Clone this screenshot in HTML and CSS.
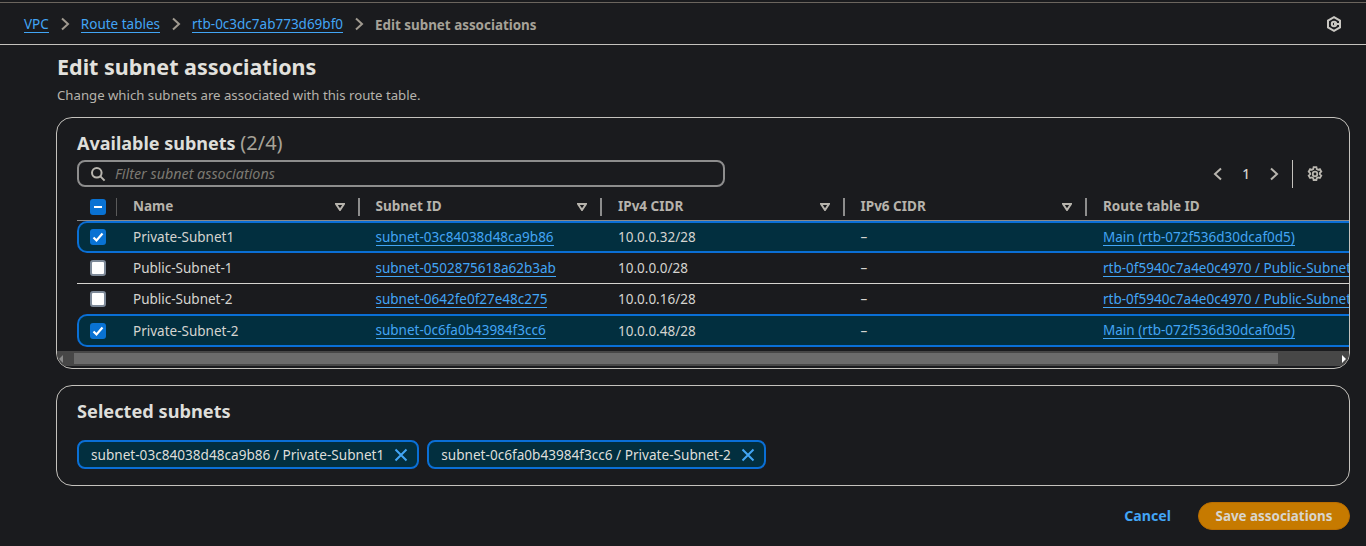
FILE: index.html
```html
<!DOCTYPE html>
<html lang="en">
<head>
<meta charset="utf-8">
<title>Edit subnet associations</title>
<link rel="stylesheet" href="styles.css">
</head>
<body>
<nav class="crumbs">
  <a class="link" href="#">VPC</a>
  <svg class="chev" viewBox="0 0 10 14"><path d="M2 1.5 8 7l-6 5.5"/></svg>
  <a class="link" href="#">Route tables</a>
  <svg class="chev" viewBox="0 0 10 14"><path d="M2 1.5 8 7l-6 5.5"/></svg>
  <a class="link" href="#">rtb-0c3dc7ab773d69bf0</a>
  <svg class="chev" viewBox="0 0 10 14"><path d="M2 1.5 8 7l-6 5.5"/></svg>
  <span class="current">Edit subnet associations</span>
  <svg class="hex" viewBox="0 0 16 16"><path d="M8 1.200 14 4.600v6.800L8 14.800 2 11.400V4.600z"/><circle cx="8" cy="8" r="2.200"/><path d="M8 8h6"/></svg>
</nav>
<main class="page">
  <h1>Edit subnet associations</h1>
  <p class="sub">Change which subnets are associated with this route table.</p>

  <section class="card avail">
    <h2 class="avail-title">Available subnets <span class="count">(2/4)</span></h2>
    <div class="tools">
      <label class="filter">
        <svg class="search" viewBox="0 0 16 16"><circle cx="6.800" cy="6.800" r="4.800"/><path d="m10.400 10.400 4.200 4.200"/></svg>
        <span class="ph">Filter subnet associations</span>
      </label>
      <div class="pager">
        <svg class="pg" viewBox="0 0 10 14"><path d="M8 1.500 2 7l6 5.500"/></svg>
        <span class="num">1</span>
        <svg class="pg" viewBox="0 0 10 14"><path d="M2 1.500 8 7l-6 5.500"/></svg>
        <span class="sep"></span>
        <svg class="gear" viewBox="0 0 16 16"><path d="M6.600 1.200h2.800l.4 1.900 1.300.7 1.800-.6 1.400 2.400-1.400 1.300v1.400l1.400 1.300-1.400 2.400-1.800-.6-1.300.7-.4 1.900H6.600l-.4-1.900-1.300-.7-1.800.6-1.400-2.400 1.400-1.300V7.100L1.700 5.600l1.400-2.400 1.800.6 1.300-.7z"/><circle cx="8" cy="8" r="2.300"/></svg>
      </div>
    </div>
    <div class="table">
      <div class="row head">
        <div class="c0"><span class="cb mixed"><i></i></span><span class="div thin"></span></div>
        <div class="col">Name<svg class="sort" viewBox="0 0 10 8"><path d="M1 1h8L5 7z"/></svg><span class="div"></span></div>
        <div class="col">Subnet ID<svg class="sort" viewBox="0 0 10 8"><path d="M1 1h8L5 7z"/></svg><span class="div"></span></div>
        <div class="col">IPv4 CIDR<svg class="sort" viewBox="0 0 10 8"><path d="M1 1h8L5 7z"/></svg><span class="div"></span></div>
        <div class="col">IPv6 CIDR<svg class="sort" viewBox="0 0 10 8"><path d="M1 1h8L5 7z"/></svg><span class="div"></span></div>
        <div class="col">Route table ID</div>
      </div>
      <div class="row sel">
        <div class="c0"><span class="cb on"><svg viewBox="0 0 16 16"><path d="m3.500 8.500 3 3 6-7"/></svg></span></div>
        <div class="col">Private-Subnet1</div>
        <div class="col"><a class="link" href="#">subnet-03c84038d48ca9b86</a></div>
        <div class="col">10.0.0.32/28</div>
        <div class="col">–</div>
        <div class="col"><a class="link" href="#">Main (rtb-072f536d30dcaf0d5)</a></div>
      </div>
      <div class="row plain">
        <div class="c0"><span class="cb off"></span></div>
        <div class="col">Public-Subnet-1</div>
        <div class="col"><a class="link" href="#">subnet-0502875618a62b3ab</a></div>
        <div class="col">10.0.0.0/28</div>
        <div class="col">–</div>
        <div class="col"><a class="link" href="#">rtb-0f5940c7a4e0c4970 / Public-Subnet-RT</a></div>
      </div>
      <div class="row plain last">
        <div class="c0"><span class="cb off"></span></div>
        <div class="col">Public-Subnet-2</div>
        <div class="col"><a class="link" href="#">subnet-0642fe0f27e48c275</a></div>
        <div class="col">10.0.0.16/28</div>
        <div class="col">–</div>
        <div class="col"><a class="link" href="#">rtb-0f5940c7a4e0c4970 / Public-Subnet-RT</a></div>
      </div>
      <div class="row sel tall">
        <div class="c0"><span class="cb on"><svg viewBox="0 0 16 16"><path d="m3.500 8.500 3 3 6-7"/></svg></span></div>
        <div class="col">Private-Subnet-2</div>
        <div class="col"><a class="link" href="#">subnet-0c6fa0b43984f3cc6</a></div>
        <div class="col">10.0.0.48/28</div>
        <div class="col">–</div>
        <div class="col"><a class="link" href="#">Main (rtb-072f536d30dcaf0d5)</a></div>
      </div>
    </div>
    <div class="scroll">
      <span class="arrow left"></span>
      <span class="thumb"></span>
      <span class="arrow right"></span>
    </div>
  </section>

  <section class="card selected">
    <h2 class="sel-title">Selected subnets</h2>
    <div class="tokens">
      <span class="token">subnet-03c84038d48ca9b86 / Private-Subnet1<svg class="x" viewBox="0 0 16 16"><path d="m2.500 2.500 11 11m0-11-11 11"/></svg></span>
      <span class="token">subnet-0c6fa0b43984f3cc6 / Private-Subnet-2<svg class="x" viewBox="0 0 16 16"><path d="m2.500 2.500 11 11m0-11-11 11"/></svg></span>
    </div>
  </section>

  <div class="actions">
    <a class="cancel" href="#">Cancel</a>
    <button class="save" type="button">Save associations</button>
  </div>
</main>
</body>
</html>
```
FILE: styles.css
```css
* { box-sizing: border-box; }
html, body { margin: 0; height: 546px; overflow: hidden; }
body {
  background: #1a1b1e;
  color: #d5d4d0;
  font-family: "Noto Sans", "Open Sans", sans-serif;
  font-size: 13.5px;
  line-height: 18px;
  padding-top: 2px;
}
.link { color: #42a5f5; text-decoration: none; border-bottom: 1px solid #42a5f5; line-height: 16px; display: inline-block; white-space: nowrap; }
.crumbs {
  height: 43px;
  border-top: 1px solid #6b655e;
  border-bottom: 1px solid #c4c2bd;
  display: flex;
  align-items: center;
  padding: 0 24px;
  white-space: nowrap;
}
.crumbs .link, .current { margin-top: 2px; }
.chev { width: 10px; height: 14px; margin: 0 11px; fill: none; stroke: #a09a90; stroke-width: 2; }
.current { color: #a6a298; font-weight: 700; font-size: 13.4px; }
.hex { width: 16px; height: 16px; margin-left: auto; fill: none; stroke: #c9c7c2; stroke-width: 2; }
.page { padding: 0 16px 0 56px; }
h1 { margin: 7px 0 0 1px; font-size: 21.5px; line-height: 30px; font-weight: 700; color: #e2e1dd; }
.sub { margin: 4px 0 0 1px; font-size: 13.2px; line-height: 18px; color: #b6b3ac; }
.card { border: 1px solid #c4c2bd; border-radius: 16px; overflow: hidden; }
.avail { margin-top: 13px; height: 252px; padding-top: 13px; }
.avail-title { margin: 0 0 0 20px; font-size: 18px; line-height: 24px; font-weight: 700; color: #dededa; }
.count { font-weight: 400; font-size: 20px; color: #a6a298; }
.tools { display: flex; align-items: center; margin: 5px 0 0 20px; height: 27px; }
.filter {
  width: 648px; height: 27px;
  border: 2px solid #8d8d8d; border-radius: 8px;
  display: flex; align-items: center; padding-left: 11px;
}
.search { width: 16px; height: 16px; fill: none; stroke: #b8b5ae; stroke-width: 2; }
.ph { font-style: italic; color: #7c7972; margin-left: 9px; font-size: 14.3px; }
.pager { margin-left: auto; display: flex; align-items: center; margin-right: 26px; }
.pg { width: 10px; height: 14px; fill: none; stroke: #b8b5ae; stroke-width: 2; }
.num { width: 46px; text-align: center; font-weight: 500; color: #d5d4d0; }
.sep { width: 1px; height: 28px; background: #c4c2bd; margin: 0 14px 0 13px; }
.gear { width: 16px; height: 16px; fill: none; stroke: #b8b5ae; stroke-width: 1.8; }
.table { margin-top: 6px; }
.row { display: grid; grid-template-columns: 56px repeat(4, 242.5px) 400px; white-space: nowrap; align-items: center; margin-left: 20px; }
.head { height: 28px; font-weight: 700; color: #b6b3ac; border-bottom: 1px solid #8a8a8a; line-height: 17px; }
.c0 { display: flex; align-items: center; padding-left: 13px; position: relative; height: 100%; }
.col { position: relative; display: flex; align-items: center; height: 100%; }
.sort { position: absolute; right: 31px; top: 10px; width: 10px; height: 8px; fill: none; stroke: #b6b3ac; stroke-width: 2; }
.div { position: absolute; right: 16px; top: 5px; width: 2px; height: 18px; background: #8d8d8d; }
.div.thin { left: 39px; right: auto; width: 1px; background: #5a5a5a; }
.cb { width: 16px; height: 16px; border-radius: 3px; display: flex; align-items: center; justify-content: center; }
.cb svg { width: 16px; height: 16px; fill: none; stroke: #fff; stroke-width: 2.2; }
.on, .mixed { background: #0972d3; }
.mixed i { display: block; width: 8px; height: 2px; background: #fff; }
.off { background: #fff; border: 2px solid #7d8998; }
.sel { height: 32px; background: #022f3f; border: 2px solid #0a6fd6; border-right: 0; border-radius: 10px 0 0 10px; }
.sel.tall { height: 33px; }
.sel .c0 { padding-left: 11px; }
.sel .col { margin-left: -2px; }
.plain { height: 31px; border-bottom: 1px solid #d5d4d0; }
.plain.last { height: 30px; border-bottom: 0; }
.scroll { margin-top: 4px; height: 15px; background: #474747; display: flex; align-items: stretch; }
.arrow { width: 17px; position: relative; flex: none; }
.arrow.left::after, .arrow.right::after { content: ""; position: absolute; top: 4px; border: 4px solid transparent; }
.arrow.left::after { left: 2px; border-right-color: #8a8a8a; border-left: 0; }
.arrow.right { margin-left: auto; }
.arrow.right::after { right: 3px; border-left-color: #fff; border-right: 0; }
.thumb { width: 1204px; background: #6b6b6b; margin: 2px 0; }
.selected { margin-top: 16px; height: 101px; padding: 13px 20px 0; }
.sel-title { margin: 0; font-size: 18.2px; line-height: 24px; font-weight: 700; color: #dededa; }
.tokens { display: flex; gap: 8px; margin-top: 17px; }
.token {
  height: 29px; border: 2px solid #0a6fd6; border-radius: 8px;
  background: #022f3f; color: #dededa; font-size: 13.6px;
  display: flex; align-items: center; padding: 0 8px 0 12px; white-space: nowrap;
}
.x { width: 16px; height: 16px; margin-left: 9px; fill: none; stroke: #42a5f5; stroke-width: 2; }
.actions { display: flex; align-items: center; justify-content: flex-end; margin-top: 16px; }
.cancel { color: #42a5f5; font-weight: 700; font-size: 14.2px; text-decoration: none; margin-right: 27px; }
.save {
  width: 152px; height: 28px; border: 1px solid #b96d00; border-radius: 14px;
  background: #c67a00; color: #d8d5ce; font: 700 13.4px "Noto Sans", sans-serif;
}
```
